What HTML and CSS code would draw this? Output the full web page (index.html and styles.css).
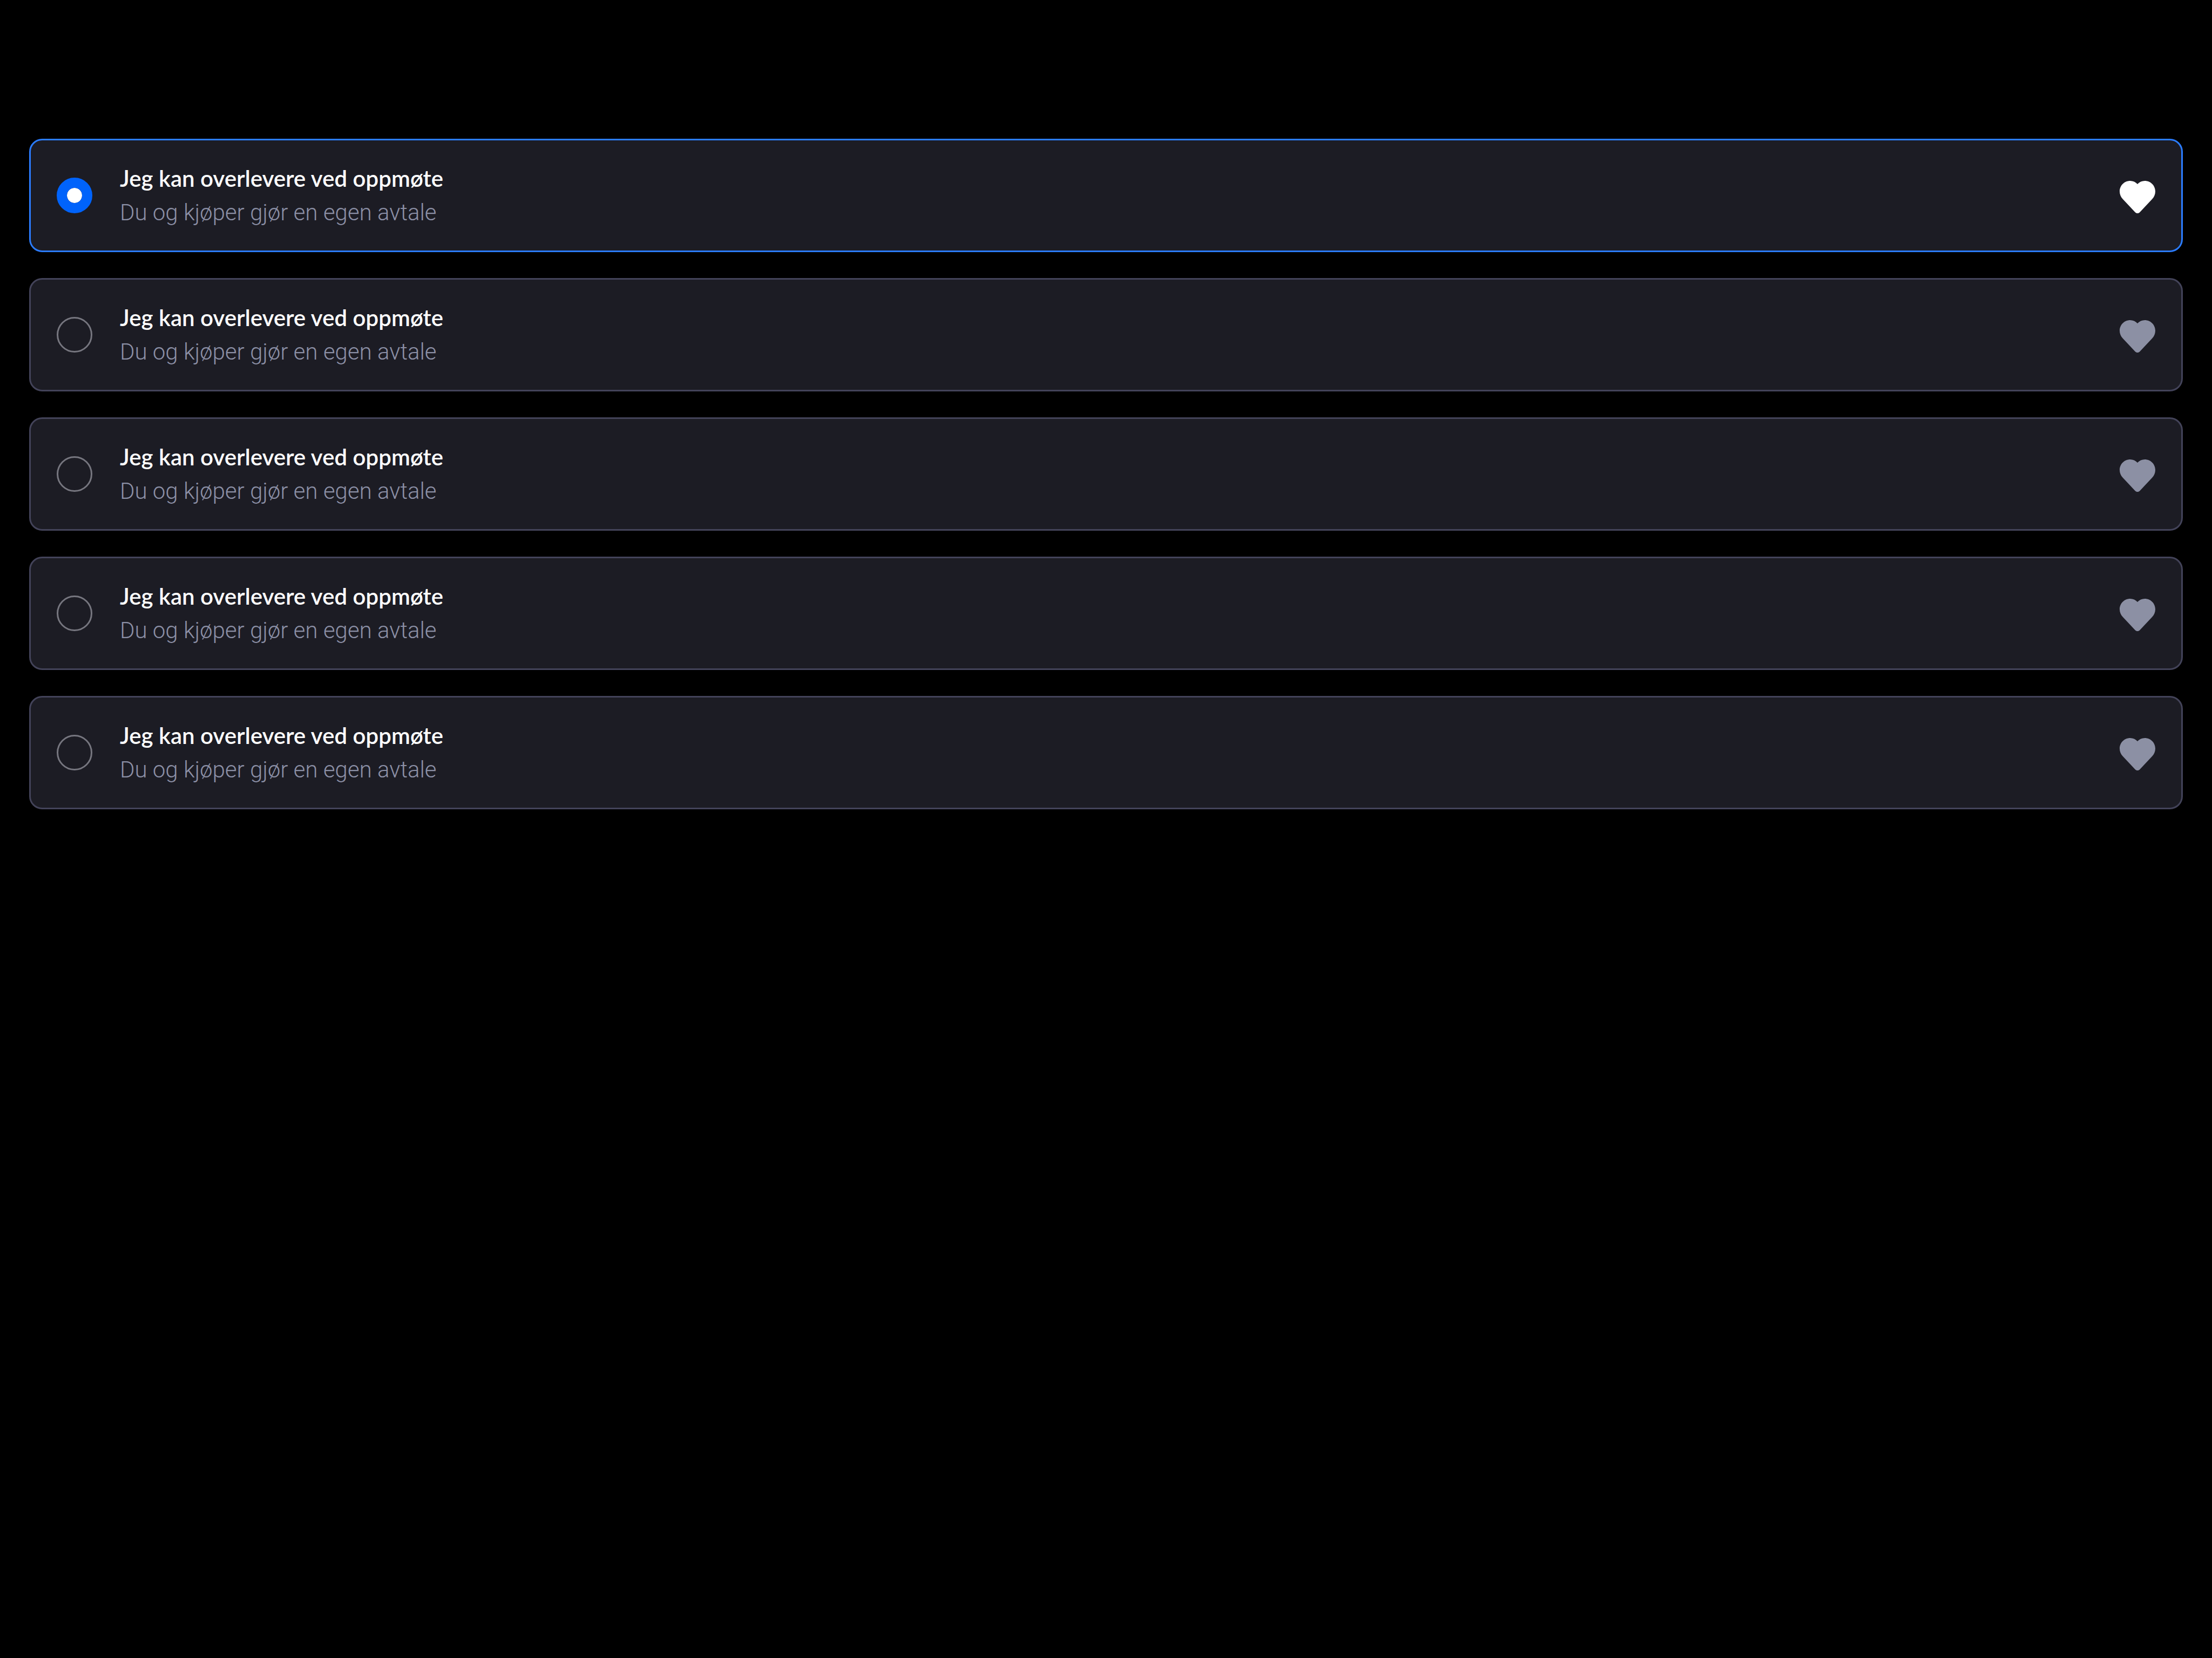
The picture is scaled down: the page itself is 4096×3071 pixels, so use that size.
FILE: index.html
```
<!DOCTYPE html>
<html lang="no">
<head>
<meta charset="utf-8">
<title>Leveringsmåte</title>
<link rel="stylesheet" href="styles.css">
</head>
<body>
<svg class="sprite" aria-hidden="true">
  <symbol id="heart" viewBox="0 0 66 66">
    <path d="M33 12C29.500 8.200 24.700 6 19.500 6C8.700 6 0 14.700 0 25.500C0 31 2.200 36 5.800 39.700L28.800 64.200C31 66.600 35 66.600 37.200 64.200L60.200 39.700C63.800 36 66 31 66 25.500C66 14.700 57.300 6 46.500 6C41.300 6 36.500 8.200 33 12Z"/>
  </symbol>
</svg>
<form class="options">
  <label class="option">
    <input class="radio" type="radio" name="delivery" checked>
    <span class="text">
      <span class="title">Jeg kan overlevere ved oppmøte</span>
      <span class="subtitle">Du og kjøper gjør en egen avtale</span>
    </span>
    <svg class="icon" aria-hidden="true"><use href="#heart"/></svg>
  </label>
  <label class="option">
    <input class="radio" type="radio" name="delivery">
    <span class="text">
      <span class="title">Jeg kan overlevere ved oppmøte</span>
      <span class="subtitle">Du og kjøper gjør en egen avtale</span>
    </span>
    <svg class="icon" aria-hidden="true"><use href="#heart"/></svg>
  </label>
  <label class="option">
    <input class="radio" type="radio" name="delivery">
    <span class="text">
      <span class="title">Jeg kan overlevere ved oppmøte</span>
      <span class="subtitle">Du og kjøper gjør en egen avtale</span>
    </span>
    <svg class="icon" aria-hidden="true"><use href="#heart"/></svg>
  </label>
  <label class="option">
    <input class="radio" type="radio" name="delivery">
    <span class="text">
      <span class="title">Jeg kan overlevere ved oppmøte</span>
      <span class="subtitle">Du og kjøper gjør en egen avtale</span>
    </span>
    <svg class="icon" aria-hidden="true"><use href="#heart"/></svg>
  </label>
  <label class="option">
    <input class="radio" type="radio" name="delivery">
    <span class="text">
      <span class="title">Jeg kan overlevere ved oppmøte</span>
      <span class="subtitle">Du og kjøper gjør en egen avtale</span>
    </span>
    <svg class="icon" aria-hidden="true"><use href="#heart"/></svg>
  </label>
</form>
</body>
</html>
```
FILE: styles.css
```
* {
  box-sizing: border-box;
}

body {
  margin: 0;
  background: #000;
  font-family: Lato, "Liberation Sans", sans-serif;
}

.sprite {
  display: none;
}

.options {
  display: flex;
  flex-direction: column;
  gap: 48px;
  padding: 257px 54px 54px;
}

.option {
  display: flex;
  align-items: center;
  gap: 51px;
  padding: 39px 48px;
  border: 3px solid #434359;
  border-radius: 24px;
  background: #1c1c24;
  cursor: pointer;
}

.option:has(.radio:checked) {
  border-color: #2b7cff;
}

.radio {
  appearance: none;
  flex: none;
  width: 66px;
  height: 66px;
  margin: 0;
  border: 3px solid #76767f;
  border-radius: 50%;
}

.radio:checked {
  border: 19px solid #0063fb;
  background: #fff;
  background-clip: padding-box;
}

.text {
  flex: 1;
  display: flex;
  flex-direction: column;
  font-size: 42px;
  line-height: 63px;
}

.title {
  color: #fff;
  font-weight: 600;
}

.subtitle {
  color: #8c90a6;
  font-family: Roboto, "Liberation Sans", sans-serif;
  font-weight: 300;
}

.icon {
  flex: none;
  width: 66px;
  height: 66px;
  fill: #8c90a4;
}

.radio:checked ~ .icon {
  fill: #fff;
}
```
